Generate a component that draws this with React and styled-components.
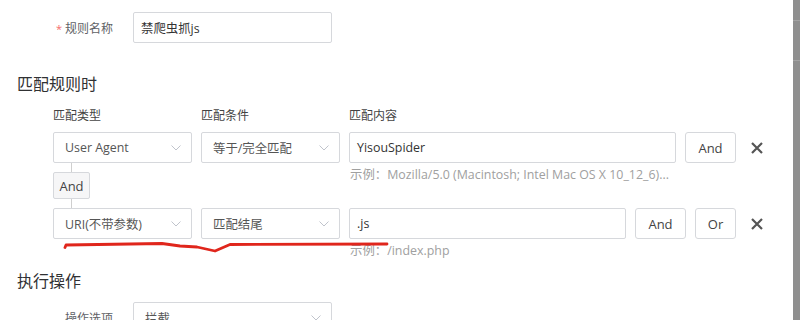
import React from "react";
import styled, { createGlobalStyle } from "styled-components";

const GlobalStyle = createGlobalStyle`
  html, body {
    margin: 0;
    padding: 0;
    background: #fff;
    overflow: hidden;
  }
  body {
    font-family: "Open Sans", "Noto Sans CJK SC", sans-serif;
    font-size: 12px;
    color: #606266;
  }
  * {
    box-sizing: border-box;
  }
`;

const Page = styled.div`
  display: flex;
  width: 800px;
  height: 320px;
  position: relative;
  overflow: hidden;
`;

const Main = styled.div`
  flex: 1;
  padding: 12px 0 0 17px;
`;

const Scrollbar = styled.div`
  width: 7px;
  height: 320px;
  background: #8f8f8f;
  display: flex;
  flex-direction: column;
`;

const ScrollSeg = styled.div`
  height: ${(p) => p.h}px;
  border-bottom: 1px solid #a3a3a3;
`;

const FormItem = styled.div`
  display: flex;
  align-items: center;
  margin-top: ${(p) => p.mt || 0}px;
`;

const Label = styled.div`
  width: 116px;
  padding-right: 20px;
  text-align: right;
  color: #606266;
  font-size: 12px;
  white-space: nowrap;
`;

const Star = styled.span`
  color: #f56c6c;
  margin-right: 3px;
  font-size: 11px;
`;

const TextInput = styled.div`
  width: ${(p) => (p.w ? `${p.w}px` : "100%")};
  height: 31px;
  border: 1px solid #d6d8dc;
  border-radius: 2px;
  padding: 0 7px;
  display: flex;
  align-items: center;
  color: #333;
  font-size: 12.4px;
  white-space: nowrap;
`;

const Select = styled.div`
  width: ${(p) => p.w}px;
  height: 31px;
  border: 1px solid #d6d8dc;
  border-radius: 2px;
  padding: 0 10px 0 11px;
  display: flex;
  align-items: center;
  justify-content: space-between;
  color: #555;
  font-size: 12.4px;
  white-space: nowrap;
  flex-shrink: 0;
`;

const SectionTitle = styled.div`
  font-size: 16px;
  line-height: 24px;
  color: #303133;
  margin-top: ${(p) => p.mt}px;
`;

const RuleBlock = styled.div`
  padding-left: 36px;
  margin-top: 10px;
`;

const HeaderRow = styled.div`
  display: flex;
  gap: 9px;
  line-height: 20px;
  color: #444;
  margin-bottom: 6px;
`;

const HeaderCell = styled.div`
  width: ${(p) => (p.w ? `${p.w}px` : "auto")};
  flex: ${(p) => (p.w ? "none" : 1)};
`;

const ConditionRow = styled.div`
  display: flex;
  gap: 9px;
  width: 716px;
  align-items: flex-start;
`;

const Col = styled.div`
  display: flex;
  flex-direction: column;
  width: ${(p) => (p.w ? `${p.w}px` : "auto")};
  flex: ${(p) => (p.w ? "none" : 1)};
  min-width: 0;
`;

const Hint = styled.div`
  margin-top: 2px;
  padding-left: 1px;
  line-height: 20px;
  font-size: 12.4px;
  color: #a0a0a0;
  white-space: nowrap;
`;

const Connector = styled.div`
  display: flex;
  flex-direction: column;
  align-items: center;
  width: 37px;
`;

const ConnectorLine = styled.div`
  width: 1px;
  height: 9px;
  background: #cfcfcf;
`;

const ConnectorTag = styled.div`
  width: 37px;
  height: 27px;
  border: 1px solid #d6d8dc;
  border-radius: 2px;
  background: #f6f6f7;
  display: flex;
  align-items: center;
  justify-content: center;
  color: #444;
  font-size: 13px;
`;

const Button = styled.div`
  width: ${(p) => p.w}px;
  height: 31px;
  border: 1px solid #d6d8dc;
  border-radius: 3px;
  background: #fff;
  display: flex;
  align-items: center;
  justify-content: center;
  color: #444;
  font-size: 13px;
  flex-shrink: 0;
`;

const CloseBtn = styled.div`
  width: 24px;
  height: 31px;
  display: flex;
  align-items: center;
  justify-content: center;
  flex-shrink: 0;
`;

const Annotation = styled.svg`
  position: absolute;
  left: 0;
  top: 0;
  pointer-events: none;
`;

const Chevron = () => (
  <svg width="10" height="6" viewBox="0 0 10 6">
    <polyline points="0.5,0.5 5,5 9.5,0.5" fill="none" stroke="#c0c4cc" strokeWidth="1" />
  </svg>
);

const CloseIcon = () => (
  <svg width="12" height="12" viewBox="0 0 12 12">
    <path d="M1 1 L11 11 M11 1 L1 11" stroke="#555" strokeWidth="2.2" />
  </svg>
);

export default function App() {
  return (
    <>
      <GlobalStyle />
      <Page>
        <Main>
          <FormItem>
            <Label>
              <Star>*</Star>规则名称
            </Label>
            <TextInput w={199}>禁爬虫抓js</TextInput>
          </FormItem>

          <SectionTitle mt={29}>匹配规则时</SectionTitle>

          <RuleBlock>
            <HeaderRow>
              <HeaderCell w={139}>匹配类型</HeaderCell>
              <HeaderCell w={139}>匹配条件</HeaderCell>
              <HeaderCell>匹配内容</HeaderCell>
            </HeaderRow>

            <ConditionRow>
              <Col w={139}>
                <Select w={139}>
                  User Agent
                  <Chevron />
                </Select>
                <Connector>
                  <ConnectorLine />
                  <ConnectorTag>And</ConnectorTag>
                  <ConnectorLine />
                </Connector>
              </Col>
              <Select w={139}>
                等于/完全匹配
                <Chevron />
              </Select>
              <Col>
                <TextInput>YisouSpider</TextInput>
                <Hint>示例：Mozilla/5.0 (Macintosh; Intel Mac OS X 10_12_6)...</Hint>
              </Col>
              <Button w={51}>And</Button>
              <CloseBtn>
                <CloseIcon />
              </CloseBtn>
            </ConditionRow>

            <ConditionRow>
              <Select w={139}>
                URI(不带参数)
                <Chevron />
              </Select>
              <Select w={139}>
                匹配结尾
                <Chevron />
              </Select>
              <Col>
                <TextInput>.js</TextInput>
                <Hint>示例：/index.php</Hint>
              </Col>
              <Button w={51}>And</Button>
              <Button w={41}>Or</Button>
              <CloseBtn>
                <CloseIcon />
              </CloseBtn>
            </ConditionRow>
          </RuleBlock>

          <SectionTitle mt={8}>执行操作</SectionTitle>

          <FormItem mt={9}>
            <Label>操作选项</Label>
            <Select w={199}>
              拦截
              <Chevron />
            </Select>
          </FormItem>
        </Main>

        <Scrollbar>
          <ScrollSeg h={21} />
          <ScrollSeg h={40} />
        </Scrollbar>

        <Annotation width="800" height="320">
          <path
            d="M65 247.5 L66 245 L162 243.5 L180 246 L197 247 L215 251 L230 244.5 L387 244"
            fill="none"
            stroke="#e0261c"
            strokeWidth="2.8"
            strokeLinejoin="round"
            strokeLinecap="round"
          />
        </Annotation>
      </Page>
    </>
  );
}
